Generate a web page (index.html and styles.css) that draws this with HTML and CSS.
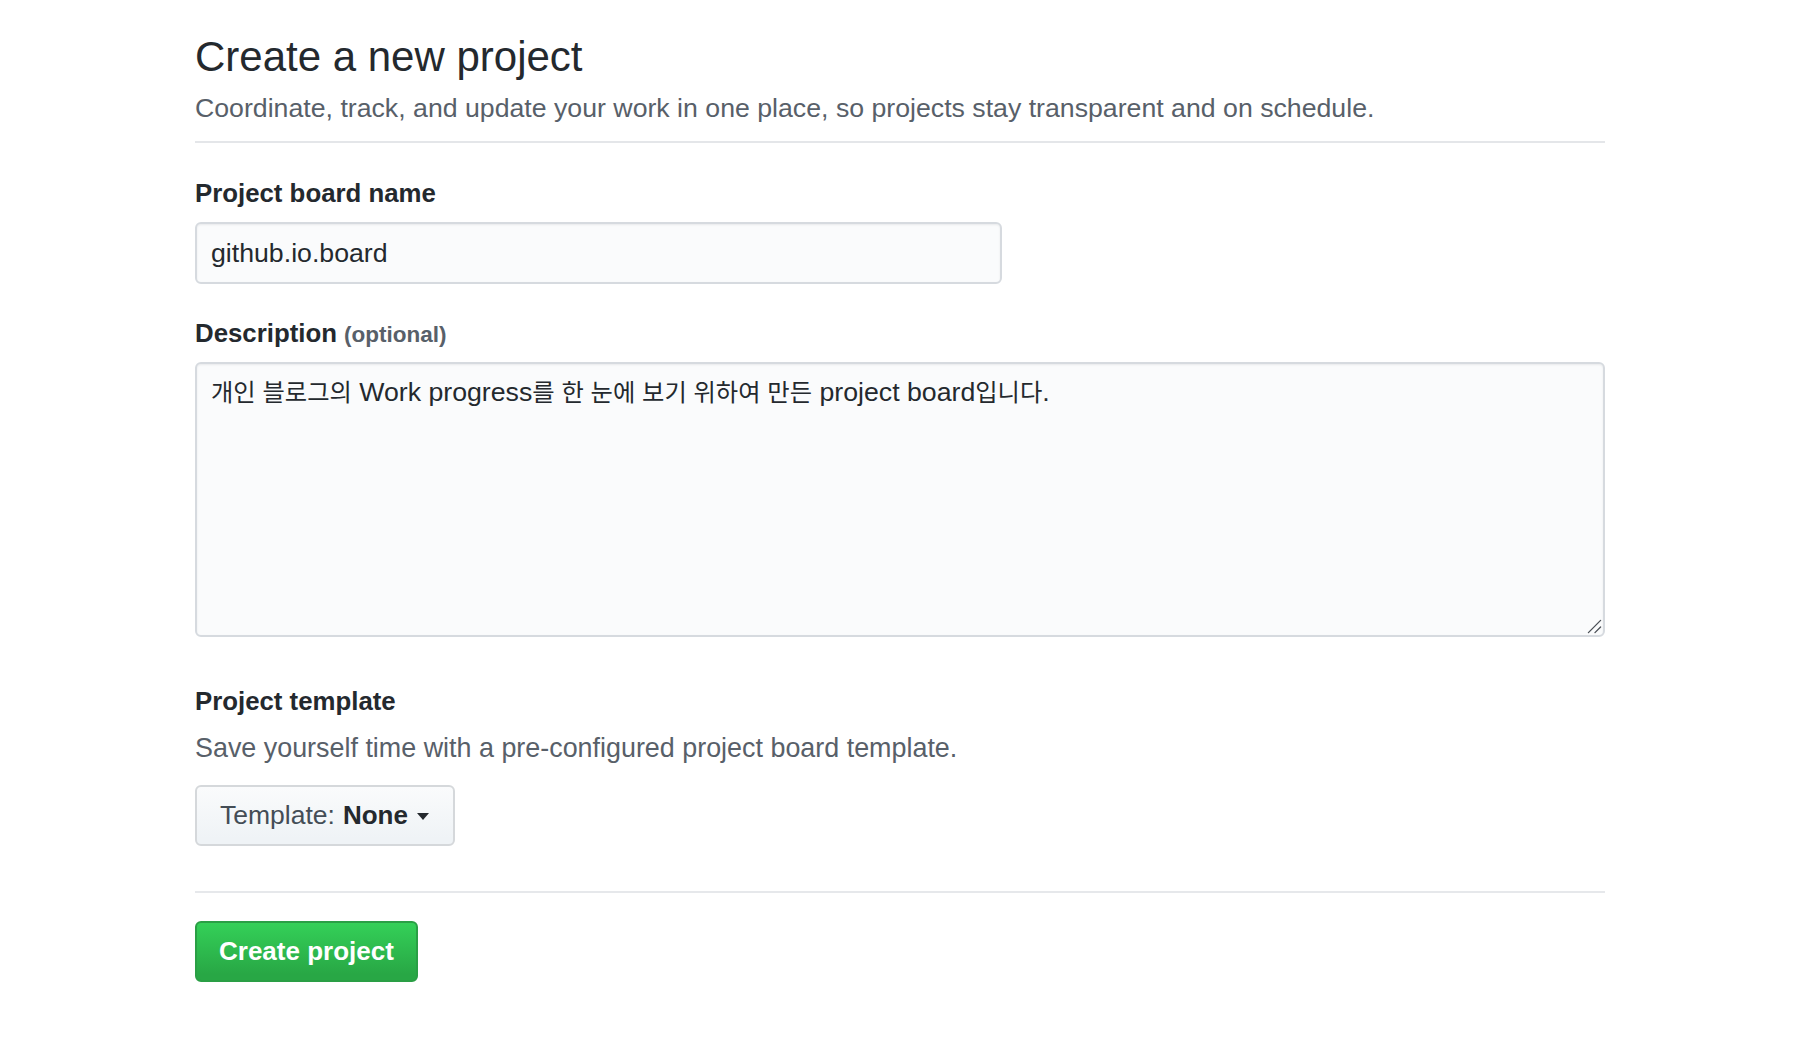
FILE: index.html
```html
<!DOCTYPE html>
<html lang="ko">
<head>
<meta charset="utf-8">
<title>Create a new project</title>
<link rel="stylesheet" href="styles.css">
</head>
<body>
<div class="page">
  <header class="page-head">
    <h1 class="title">Create a new project</h1>
    <p class="lead">Coordinate, track, and update your work in one place, so projects stay transparent and on schedule.</p>
  </header>
  <form class="form">
    <div class="field">
      <label class="label" for="name">Project board name</label>
      <input class="input" id="name" type="text" value="github.io.board">
    </div>
    <div class="field">
      <label class="label" for="desc">Description <span class="optional">(optional)</span></label>
      <div class="textarea-wrap">
        <div class="textarea" id="desc" role="textbox" aria-multiline="true" contenteditable="true"><span class="ko">개인 블로그의</span> Work progress<span class="ko">를 한 눈에 보기 위하여 만든</span> project board<span class="ko">입니다</span>.</div>
        <svg class="grip" width="16" height="16" viewBox="0 0 16 16" aria-hidden="true">
          <line x1="1.5" y1="14.5" x2="14.5" y2="1.5" stroke="#4a4f55" stroke-width="1.4" stroke-linecap="round"/>
          <line x1="8.5" y1="14.5" x2="14.5" y2="8.5" stroke="#4a4f55" stroke-width="1.4" stroke-linecap="round"/>
        </svg>
      </div>
    </div>
    <div class="section">
      <h2 class="label">Project template</h2>
      <p class="lead lead-sm">Save yourself time with a pre-configured project board template.</p>
      <button type="button" class="btn-select">Template: <strong class="select-value">None</strong><span class="caret"></span></button>
    </div>
    <div class="actions">
      <button type="button" class="btn-primary">Create project</button>
    </div>
  </form>
</div>
</body>
</html>
```

FILE: styles.css
```css
html, body {
  margin: 0;
  padding: 0;
  background: #ffffff;
}

body {
  font-family: "Liberation Sans", Arial, "Noto Sans CJK KR", sans-serif;
  color: #24292e;
}

.page {
  width: 1410px;
  margin: 0 auto;
  padding-top: 31px;
}

.page-head {
  padding-bottom: 15px;
  border-bottom: 2px solid #e4e6e9;
}

.title {
  margin: 0;
  font-size: 42px;
  font-weight: 400;
  line-height: 52px;
  color: #24292e;
}

.lead {
  margin: 7px 0 0;
  font-size: 26.7px;
  line-height: 36px;
  color: #586069;
}

.form {
  display: flex;
  flex-direction: column;
}

.field {
  display: flex;
  flex-direction: column;
  margin-top: 34px;
}

.field + .field {
  margin-top: 33px;
}

.label {
  display: block;
  margin: 0 0 13px;
  font-size: 25.8px;
  font-weight: 700;
  line-height: 32px;
  color: #24292e;
}

.optional {
  font-size: 22.5px;
  line-height: 1;
  color: #586069;
  font-weight: 700;
}

.input,
.textarea {
  box-sizing: border-box;
  font-family: "Liberation Sans", Arial, "Noto Sans CJK KR", sans-serif;
  font-size: 26.7px;
  color: #24292e;
  background: #fafbfc;
  border: 2px solid #d6dadf;
  border-radius: 6px;
  box-shadow: inset 0 1px 2px rgba(27, 31, 35, 0.075);
  outline: none;
  margin: 0;
}

.input {
  width: 807px;
  height: 62px;
  padding: 0 14px;
}

.textarea-wrap {
  position: relative;
}

.textarea {
  width: 100%;
  height: 275px;
  padding: 9px 14px;
  line-height: 36px;
  overflow: auto;
}

.ko {
  font-family: "Noto Sans CJK KR", sans-serif;
  font-size: 0.91em;
}

.grip {
  position: absolute;
  right: 3px;
  bottom: 3px;
  width: 15px;
  height: 15px;
}

.section {
  display: flex;
  flex-direction: column;
  align-items: flex-start;
  margin-top: 48px;
}

.section .label {
  margin: 0;
}

.section .lead-sm {
  margin-top: 12.5px;
  font-size: 26.9px;
}

.btn-select {
  box-sizing: border-box;
  display: inline-flex;
  align-items: center;
  margin-top: 19px;
  height: 61px;
  padding: 0 24px 0 23px;
  font-family: "Liberation Sans", Arial, sans-serif;
  font-size: 26.5px;
  color: #444d56;
  background-image: linear-gradient(-180deg, #fafbfc 0%, #eff3f6 90%);
  border: 2px solid #d5d8db;
  border-radius: 6px;
  cursor: pointer;
}

.select-value {
  margin-left: 8px;
  font-size: 26px;
  font-weight: 700;
  color: #24292e;
}

.caret {
  display: inline-block;
  width: 0;
  height: 0;
  margin-left: 9px;
  margin-top: 3px;
  border-top: 7px solid #24292e;
  border-left: 6.5px solid transparent;
  border-right: 6.5px solid transparent;
}

.actions {
  margin-top: 45px;
  padding-top: 28px;
  border-top: 2px solid #e6e8eb;
}

.btn-primary {
  box-sizing: border-box;
  height: 61px;
  padding: 0 22px;
  font-family: "Liberation Sans", Arial, sans-serif;
  font-size: 26px;
  font-weight: 700;
  color: #ffffff;
  background-image: linear-gradient(-180deg, #34d058 0%, #28a745 90%);
  border: 2px solid #2a9f45;
  border-radius: 6px;
  cursor: pointer;
}
```
